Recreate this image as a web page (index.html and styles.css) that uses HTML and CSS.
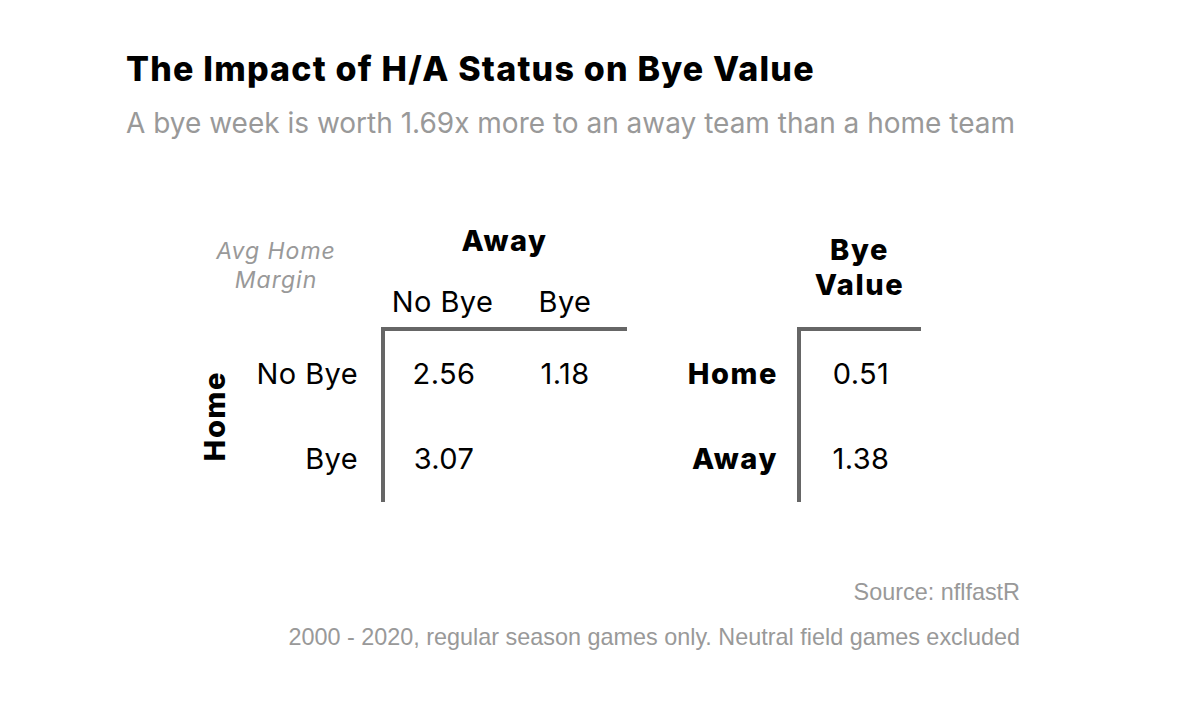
FILE: index.html
```html
<!DOCTYPE html>
<html lang="en">
<head>
<meta charset="utf-8">
<title>The Impact of H/A Status on Bye Value</title>
<link rel="stylesheet" href="styles.css">
</head>
<body>
<main class="page">
  <h1 class="title">The Impact of H/A Status on Bye Value</h1>
  <p class="subtitle">A bye week is worth 1.69x more to an away team than a home team</p>

  <div class="matrix">
    <div class="corner-note">Avg Home<br>Margin</div>
    <div class="head-away">Away</div>
    <div class="head-bye-value">Bye<br>Value</div>

    <div class="col-label c-col">No Bye</div>
    <div class="col-label d-col">Bye</div>

    <div class="side-home"><span>Home</span></div>

    <div class="row-label r3">No Bye</div>
    <div class="cell c-col r3 bl bt">2.56</div>
    <div class="cell d-col r3 bt">1.18</div>
    <div class="row-label bold e-col r3">Home</div>
    <div class="cell f-col r3 bl bt">0.51</div>

    <div class="row-label r4">Bye</div>
    <div class="cell c-col r4 bl">3.07</div>
    <div class="cell d-col r4"></div>
    <div class="row-label bold e-col r4">Away</div>
    <div class="cell f-col r4 bl">1.38</div>
  </div>

  <footer class="notes">
    <p class="source">Source: nflfastR</p>
    <p class="caption">2000 - 2020, regular season games only. Neutral field games excluded</p>
  </footer>
</main>
</body>
</html>
```

FILE: styles.css
```css
html, body {
  margin: 0;
  padding: 0;
  background: #ffffff;
}

body {
  font-family: "Inter", "Noto Sans", sans-serif;
  color: #000;
}

.page {
  width: 894px;
  padding: 49px 0 0 126px;
}

.title {
  margin: 0;
  font-size: 34px;
  line-height: 40px;
  font-weight: 800;
  letter-spacing: 1.2px;
}

.subtitle {
  margin: 16px 0 0;
  font-size: 28px;
  line-height: 36px;
  font-weight: 400;
  color: #999999;
}

.matrix {
  display: grid;
  grid-template-columns: 50px 142px 121px 124px 171px 123px;
  grid-template-rows: 48px 57px 89px 86px;
  margin: 81px 0 0 64px;
  font-size: 29px;
  line-height: 34px;
  letter-spacing: 0.4px;
}

.corner-note {
  grid-column: 1 / 3;
  grid-row: 1 / 3;
  padding: 15px 20px 0 0;
  text-align: center;
  font-size: 23px;
  line-height: 29px;
  letter-spacing: 1px;
  font-style: italic;
  color: #999999;
}

.head-away {
  grid-column: 3 / 5;
  grid-row: 1;
  padding-top: 2px;
  text-align: center;
  font-weight: 800;
  letter-spacing: 1.6px;
}

.head-bye-value {
  grid-column: 6;
  grid-row: 1 / 3;
  padding-top: 10px;
  text-align: center;
  font-weight: 800;
  letter-spacing: 1.6px;
  line-height: 35px;
}

.col-label {
  grid-row: 2;
  text-align: center;
  align-self: center;
  padding-top: 6px;
}

.c-col { grid-column: 3; }
.d-col { grid-column: 4; }
.e-col { grid-column: 5; }
.f-col { grid-column: 6; }

.r3 { grid-row: 3; border-top: 4px solid transparent; }
.r4 { grid-row: 4; }

.side-home {
  grid-column: 1;
  grid-row: 3 / 5;
  display: flex;
  align-items: center;
  justify-content: center;
  border-top: 4px solid transparent;
}

.side-home span {
  writing-mode: vertical-rl;
  transform: rotate(180deg);
  font-weight: 800;
  font-size: 29px;
  letter-spacing: 1.6px;
  line-height: 30px;
}

.row-label {
  grid-column: 2;
  display: flex;
  align-items: center;
  justify-content: flex-end;
  padding-right: 24px;
}

.row-label.e-col {
  grid-column: 5;
  padding-right: 20px;
}

.bold {
  font-weight: 800;
  letter-spacing: 1.6px;
}

.cell {
  display: flex;
  align-items: center;
  justify-content: center;
}

.bl { border-left: 4px solid #666666; }
.bt { border-top: 4px solid #666666; }

.cell.c-col, .cell.f-col { margin-left: -1px; }

.notes {
  margin-top: 77px;
  text-align: right;
  font-family: "Liberation Sans", Arial, sans-serif;
  color: #999999;
  font-size: 23.4px;
  line-height: 26px;
}

.notes p { margin: 0; }

.source { margin-bottom: 19px !important; }
```
